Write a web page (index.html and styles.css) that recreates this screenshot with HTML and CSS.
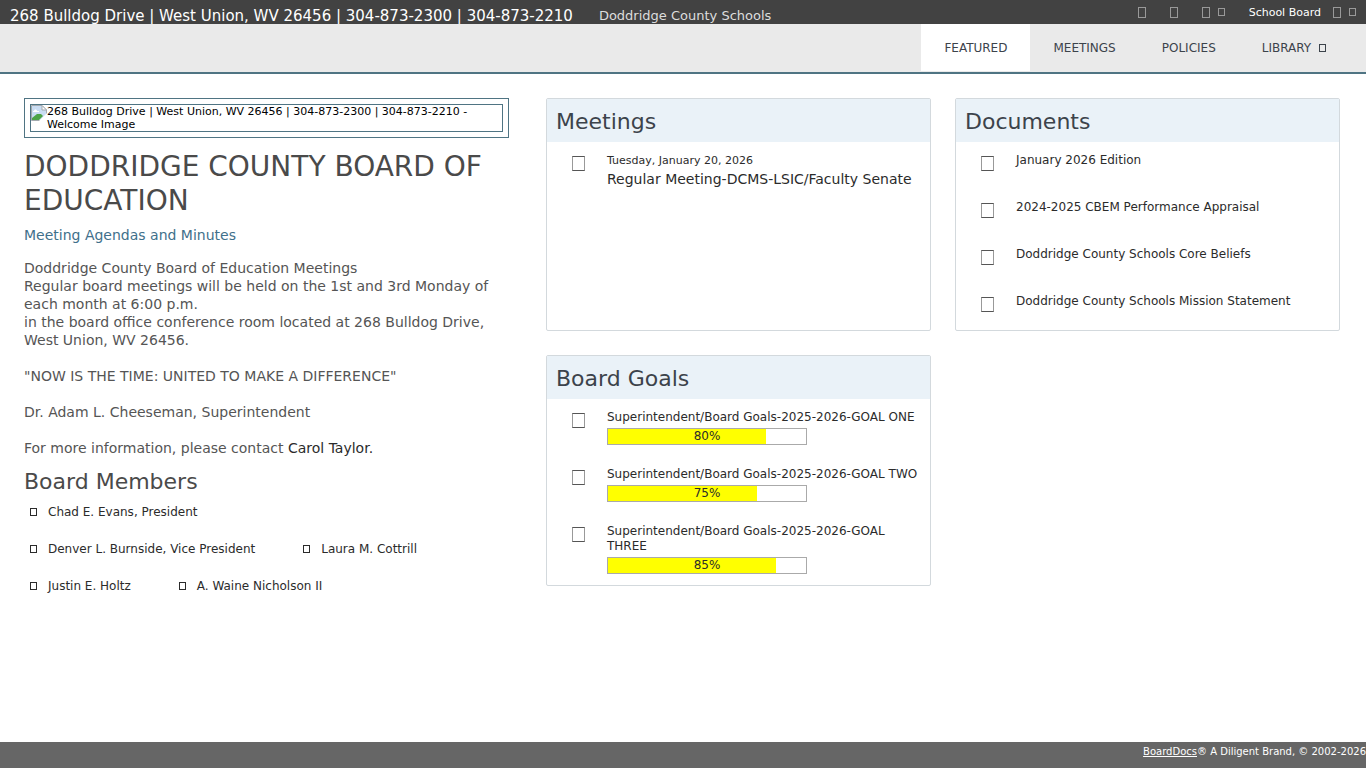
FILE: index.html
```
<!DOCTYPE html>
<html lang="en">
<head>
    <meta charset="UTF-8">
    <meta name="viewport" content="width=device-width, initial-scale=1.0">
    <title>Doddridge County Schools</title>
    <link rel="stylesheet" href="styles.css">
</head>
<body>
    <header class="topbar">
        <div class="site-name">268 Bulldog Drive | West Union, WV 26456 | 304-873-2300 | 304-873-2210</div>
        <div class="site-sub">Doddridge County Schools</div>
        <div class="tools">
            <button type="button" class="tool" aria-label="Search"><i class="box"></i></button>
            <button type="button" class="tool" aria-label="Print"><i class="box"></i></button>
            <button type="button" class="tool" aria-label="Settings"><i class="box"></i><i class="box small"></i></button>
            <button type="button" class="tool board"><span>School Board</span><i class="box"></i><i class="box small"></i></button>
        </div>
    </header>
    <nav class="nav">
        <a href="#" class="active">FEATURED</a>
        <a href="#">MEETINGS</a>
        <a href="#">POLICIES</a>
        <a href="#">LIBRARY <i class="box small"></i></a>
    </nav>

    <main class="main">
        <section class="welcome">
            <div class="frame">
                <div class="frame-in">
                    <svg width="16" height="16" viewBox="0 0 16 16" aria-hidden="true">
                        <path d="M0.5 0.5H11L15.5 5V15.5H0.5Z" fill="#c9dcf2" stroke="#a3a9ae"/>
                        <path d="M11 0.5V5H15.5Z" fill="#fff" stroke="#a3a9ae"/>
                        <path d="M3 6C3 4 6 4 6 6H8V7H2V6Z" fill="#fff"/>
                        <path d="M1 15V13L6 9L10 9L12 11L8 15Z" fill="#4da447"/>
                        <path d="M8 16L16 8V16Z" fill="#fff"/>
                    </svg>
                    <span>268 Bulldog Drive | West Union, WV 26456 | 304-873-2300 | 304-873-2210 - Welcome Image</span>
                </div>
            </div>
            <h1>DODDRIDGE COUNTY BOARD OF EDUCATION</h1>
            <a href="#" class="agenda">Meeting Agendas and Minutes</a>
            <p>
                Doddridge County Board of Education Meetings<br>
                Regular board meetings will be held on the 1st and 3rd Monday of each month at 6:00 p.m.<br>
                in the board office conference room located at 268 Bulldog Drive, West Union, WV 26456.
            </p>
            <p>"NOW IS THE TIME: UNITED TO MAKE A DIFFERENCE"</p>
            <p>Dr. Adam L. Cheeseman, Superintendent</p>
            <p>For more information, please contact <a href="#">Carol Taylor.</a></p>
            <h2>Board Members</h2>
            <ul class="members">
                <li><a href="#"><i class="box small"></i>Chad E. Evans, President</a></li>
                <li><a href="#"><i class="box small"></i>Denver L. Burnside, Vice President</a></li>
                <li><a href="#"><i class="box small"></i>Laura M. Cottrill</a></li>
                <li><a href="#"><i class="box small"></i>Justin E. Holtz</a></li>
                <li><a href="#"><i class="box small"></i>A. Waine Nicholson II</a></li>
            </ul>
        </section>

        <div class="panels">
            <section class="panel">
                <h2>Meetings</h2>
                <ul>
                    <li>
                        <i class="box big"></i>
                        <a href="#"><span class="date">Tuesday, January 20, 2026</span><span class="meeting">Regular Meeting-DCMS-LSIC/Faculty Senate</span></a>
                    </li>
                </ul>
            </section>
            <section class="panel">
                <h2>Documents</h2>
                <ul>
                    <li><i class="box big"></i><a href="#">January 2026 Edition</a></li>
                    <li><i class="box big"></i><a href="#">2024-2025 CBEM Performance Appraisal</a></li>
                    <li><i class="box big"></i><a href="#">Doddridge County Schools Core Beliefs</a></li>
                    <li><i class="box big"></i><a href="#">Doddridge County Schools Mission Statement</a></li>
                </ul>
            </section>
            <section class="panel">
                <h2>Board Goals</h2>
                <ul>
                    <li>
                        <i class="box big"></i>
                        <a href="#">Superintendent/Board Goals-2025-2026-GOAL ONE
                            <span class="bar"><span class="fill" style="width:80%"></span><span class="num">80%</span></span>
                        </a>
                    </li>
                    <li>
                        <i class="box big"></i>
                        <a href="#">Superintendent/Board Goals-2025-2026-GOAL TWO
                            <span class="bar"><span class="fill" style="width:75%"></span><span class="num">75%</span></span>
                        </a>
                    </li>
                    <li>
                        <i class="box big"></i>
                        <a href="#">Superintendent/Board Goals-2025-2026-GOAL THREE
                            <span class="bar"><span class="fill" style="width:85%"></span><span class="num">85%</span></span>
                        </a>
                    </li>
                </ul>
            </section>
        </div>
    </main>

    <footer class="footer"><a href="#">BoardDocs</a>® A Diligent Brand, © 2002-2026</footer>
</body>
</html>
```
FILE: styles.css
```
*{
    margin: 0;
    padding: 0;
    box-sizing: border-box;
    list-style: none;
}
body{
    min-height: 100vh;
    display: flex;
    flex-direction: column;
    font: 12px/15px Verdana, "DejaVu Sans", sans-serif;
    color: #333;
    background: #fff;
}
a{
    color: #2b2b2b;
    text-decoration: none;
}
h1, h2{
    font-weight: normal;
    color: #4a4a4a;
}
/* icon boxes */
.box{
    display: inline-block;
    flex: none;
    width: 8px;
    height: 11px;
    border: 1px solid currentColor;
}
.box.small{
    width: 7px;
    height: 8px;
}
.box.big{
    width: 13px;
    height: 15px;
    margin-top: 3px;
    border-color: #555 #999;
}

.topbar{
    display: flex;
    height: 24px;
    padding: 0 10px;
    overflow: hidden;
    white-space: nowrap;
    background: #424242;
    color: #fff;
}
.site-name{
    font-size: 15px;
    line-height: 32px;
}
.site-sub{
    margin-left: 26px;
    font-size: 13px;
    line-height: 32px;
    color: #ddd;
}
.tools{
    display: flex;
    align-items: center;
    gap: 24px;
    margin-left: auto;
}
.tool{
    display: flex;
    align-items: center;
    gap: 8px;
    border: 0;
    background: none;
    color: #999;
    font: 11px/15px Verdana, "DejaVu Sans", sans-serif;
    cursor: pointer;
}
.tool span{
    margin-right: 4px;
    color: #fff;
}

.nav{
    display: flex;
    justify-content: flex-end;
    height: 50px;
    padding-right: 17px;
    background: #eaeaea;
    border-bottom: 2px solid #4f7483;
}
.nav a{
    height: 47px;
    padding: 0 23px;
    line-height: 48px;
    color: #3c434b;
}
.nav a.active{
    background: #fff;
}
.nav .box{
    margin-left: 4px;
}

.main{
    flex: 1;
    display: flex;
    align-items: flex-start;
    gap: 37px;
    padding: 24px 26px 24px 24px;
}
.welcome{
    flex: 485 1 0;
    font-size: 14px;
    line-height: 18px;
    color: #555;
}
.frame{
    padding: 5px;
    border: 1px solid #4f7483;
}
.frame-in{
    display: flex;
    border: 1px solid #4f7483;
    font-size: 11px;
    line-height: 13px;
    color: #000;
}
.frame-in svg{
    flex: none;
}
.welcome h1{
    margin: 12px 0 8px;
    font-size: 28px;
    line-height: 34px;
}
.agenda{
    display: block;
    margin-bottom: 15px;
    color: #41708b;
}
.welcome p{
    margin-bottom: 18px;
}
.welcome h2{
    margin: -7px 0 10px;
    font-size: 22px;
    line-height: 27px;
}
.members{
    display: flex;
    flex-wrap: wrap;
    font-size: 12px;
    line-height: 15px;
}
.members li{
    padding: 0 42px 22px 6px;
}
.members .box{
    margin-right: 11px;
}

.panels{
    flex: 794 1 0;
    display: grid;
    grid-template-columns: 1fr 1fr;
    gap: 24px;
}
.panel{
    border: 1px solid #d3d9dd;
    border-radius: 2px;
}
.panel h2{
    height: 43px;
    padding: 0 9px;
    font-size: 22px;
    line-height: 45px;
    background: #eaf2f8;
    color: #3c434b;
}
.panel li{
    display: flex;
    gap: 22px;
    min-height: 47px;
    padding: 11px 6px 11px 25px;
}
.panel a{
    flex: 1;
}
.date, .meeting{
    display: block;
}
.date{
    font-size: 11px;
}
.meeting{
    font-size: 14px;
    line-height: 22px;
}
.bar{
    display: grid;
    width: 200px;
    height: 17px;
    margin-top: 3px;
    border: 1px solid #aaa;
}
.fill, .num{
    grid-area: 1 / 1;
}
.fill{
    background: #ff0;
}
.num{
    text-align: center;
}

.footer{
    height: 26px;
    background: #666;
    color: #fff;
    font-size: 10px;
    line-height: 20px;
    text-align: right;
}
.footer a{
    color: #fff;
    text-decoration: underline;
}
```
